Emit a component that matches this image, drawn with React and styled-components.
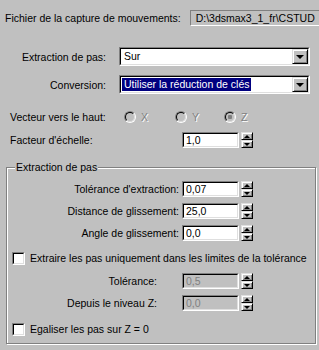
import React from "react";
import styled, { createGlobalStyle } from "styled-components";

const GlobalStyle = createGlobalStyle`
  html, body {
    margin: 0;
    padding: 0;
    background: #c0c0c0;
    overflow: hidden;
  }
  body {
    font-family: "Liberation Sans", Arial, sans-serif;
    font-size: 10.5px;
    color: #000;
  }
`;

const Page = styled.div`
  width: 319px;
  height: 350px;
  display: flex;
  flex-direction: column;
  background: #c0c0c0;
`;

const Row = styled.div`
  display: flex;
  align-items: center;
  height: ${(p) => p.$h || 16}px;
  margin-top: ${(p) => p.$top || 0}px;
  padding-left: ${(p) => p.$left || 0}px;
  flex-shrink: 0;
`;

const Label = styled.span`
  width: ${(p) => (p.$w ? `${p.$w}px` : "auto")};
  text-align: ${(p) => (p.$right ? "right" : "left")};
  margin-right: ${(p) => p.$gap || 0}px;
  white-space: nowrap;
  flex-shrink: 0;
  color: ${(p) => (p.$disabled ? "#808080" : "#000")};
  text-shadow: ${(p) => (p.$disabled ? "1px 1px 0 #fff" : "none")};
`;

const StaticPath = styled.div`
  flex: 1;
  height: 16px;
  box-sizing: border-box;
  border-top: 1px solid #808080;
  border-left: 1px solid #808080;
  border-bottom: 1px solid #fff;
  padding-left: 5px;
  line-height: 14px;
  white-space: nowrap;
  overflow: hidden;
`;

const Sunken = styled.div`
  box-sizing: border-box;
  border-top: 1px solid #808080;
  border-left: 1px solid #808080;
  border-bottom: 1px solid #fff;
  border-right: 1px solid #fff;
  display: flex;
`;

const SunkenInner = styled.div`
  flex: 1;
  display: flex;
  align-items: center;
  border-top: 1px solid #000;
  border-left: 1px solid #000;
  border-bottom: 1px solid #dfdfdf;
  border-right: 1px solid #dfdfdf;
  background: ${(p) => (p.$disabled ? "#c0c0c0" : "#fff")};
  color: ${(p) => (p.$disabled ? "#808080" : "#000")};
  overflow: hidden;
  white-space: nowrap;
`;

const Combo = styled(Sunken)`
  width: 191px;
  height: 19px;
`;

const ComboText = styled.span`
  margin-left: 1px;
  padding: 0 2px;
  line-height: 13px;
  background: ${(p) => (p.$selected ? "#000080" : "transparent")};
  color: ${(p) => (p.$selected ? "#fff" : "#000")};
  flex: ${(p) => (p.$selected ? "0 0 auto" : "1")};
`;

const Raised = styled.div`
  box-sizing: border-box;
  background: #c0c0c0;
  border-top: 1px solid #dfdfdf;
  border-left: 1px solid #dfdfdf;
  border-bottom: 1px solid #000;
  border-right: 1px solid #000;
  box-shadow: inset 1px 1px 0 #fff, inset -1px -1px 0 #808080;
  display: flex;
  align-items: center;
  justify-content: center;
`;

const DropButton = styled(Raised)`
  width: 16px;
  height: 15px;
  margin-left: auto;
`;

const Arrow = styled.span`
  width: 0;
  height: 0;
  border-left: ${(p) => p.$s || 4}px solid transparent;
  border-right: ${(p) => p.$s || 4}px solid transparent;
  ${(p) =>
    p.$up
      ? `border-bottom: ${p.$s || 4}px solid #000;`
      : `border-top: ${p.$s || 4}px solid #000;`}
`;

const Field = styled(Sunken)`
  width: 57px;
  height: 16px;
`;

const FieldText = styled.span`
  padding-left: 2px;
  line-height: 12px;
`;

const Spinner = styled.div`
  width: 12px;
  height: 16px;
  margin-left: 2px;
  display: flex;
  flex-direction: column;
`;

const SpinHalf = styled(Raised)`
  flex: 1;
`;

const RadioGroup = styled.div`
  display: flex;
  align-items: center;
`;

const Radio = styled.span`
  width: 12px;
  height: 12px;
  box-sizing: border-box;
  border-radius: 50%;
  border: 1px solid;
  border-color: #808080 #fff #fff #808080;
  display: flex;
  align-items: center;
  justify-content: center;
  margin-left: ${(p) => p.$ml || 0}px;
  margin-right: 5px;
  &::before {
    content: "";
    width: 10px;
    height: 10px;
    box-sizing: border-box;
    border-radius: 50%;
    border: 1px solid;
    border-color: #000 #dfdfdf #dfdfdf #000;
    background: ${(p) =>
      p.$on
        ? "radial-gradient(circle, #808080 0, #808080 2px, #c0c0c0 2.5px)"
        : "#c0c0c0"};
  }
`;

const Check = styled(Sunken)`
  width: 13px;
  height: 13px;
  margin-right: 5px;
`;

const Group = styled.div`
  position: relative;
  margin: 19px 0 0 6px;
  width: 310px;
  height: 177px;
  box-sizing: border-box;
  border: 1px solid #808080;
  box-shadow: inset 1px 1px 0 #fff, 1px 1px 0 #fff;
  padding-top: 13px;
  display: flex;
  flex-direction: column;
  flex-shrink: 0;
`;

const GroupTitle = styled.span`
  position: absolute;
  top: -7px;
  left: 8px;
  padding: 0 1px;
  background: #c0c0c0;
  line-height: 13px;
`;

function SpinField({ value, disabled }) {
  return (
    <>
      <Field>
        <SunkenInner $disabled={disabled}>
          <FieldText>{value}</FieldText>
        </SunkenInner>
      </Field>
      <Spinner>
        <SpinHalf>
          <Arrow $up $s={3} />
        </SpinHalf>
        <SpinHalf>
          <Arrow $s={3} />
        </SpinHalf>
      </Spinner>
    </>
  );
}

function ComboBox({ text, selected }) {
  return (
    <Combo>
      <SunkenInner>
        <ComboText $selected={selected}>{text}</ComboText>
        <DropButton>
          <Arrow $s={4} />
        </DropButton>
      </SunkenInner>
    </Combo>
  );
}

export default function App() {
  return (
    <Page>
      <GlobalStyle />
      <Row $top={10} $left={5}>
        <Label $gap={9}>Fichier de la capture de mouvements:</Label>
        <StaticPath>D:\3dsmax3_1_fr\CSTUD</StaticPath>
      </Row>

      <Row $top={21} $h={19}>
        <Label $w={106} $right $gap={13}>
          Extraction de pas:
        </Label>
        <ComboBox text="Sur" />
      </Row>

      <Row $top={9} $h={19}>
        <Label $w={106} $right $gap={13}>
          Conversion:
        </Label>
        <ComboBox text="Utiliser la réduction de clés" selected />
      </Row>

      <Row $top={16} $h={14} $left={10}>
        <Label $w={114}>Vecteur vers le haut:</Label>
        <RadioGroup>
          <Radio />
          <Label $disabled>X</Label>
          <Radio $ml={27} />
          <Label $disabled>Y</Label>
          <Radio $ml={25} $on />
          <Label $disabled>Z</Label>
        </RadioGroup>
      </Row>

      <Row $top={8} $left={10}>
        <Label $w={172}>Facteur d'échelle:</Label>
        <SpinField value="1,0" />
      </Row>

      <Group>
        <GroupTitle>Extraction de pas</GroupTitle>
        <Row>
          <Label $w={172} $right $gap={3}>
            Tolérance d'extraction:
          </Label>
          <SpinField value="0,07" />
        </Row>
        <Row $top={6}>
          <Label $w={172} $right $gap={3}>
            Distance de glissement:
          </Label>
          <SpinField value="25,0" />
        </Row>
        <Row $top={6}>
          <Label $w={172} $right $gap={3}>
            Angle de glissement:
          </Label>
          <SpinField value="0,0" />
        </Row>
        <Row $top={9} $left={5}>
          <Check>
            <SunkenInner />
          </Check>
          <Label>Extraire les pas uniquement dans les limites de la tolérance</Label>
        </Row>
        <Row $top={7}>
          <Label $w={150} $right $gap={25}>
            Tolérance:
          </Label>
          <SpinField value="0,5" disabled />
        </Row>
        <Row $top={6}>
          <Label $w={150} $right $gap={25}>
            Depuis le niveau Z:
          </Label>
          <SpinField value="0,0" disabled />
        </Row>
        <Row $top={10} $left={5}>
          <Check>
            <SunkenInner />
          </Check>
          <Label>Egaliser les pas sur Z = 0</Label>
        </Row>
      </Group>
    </Page>
  );
}
